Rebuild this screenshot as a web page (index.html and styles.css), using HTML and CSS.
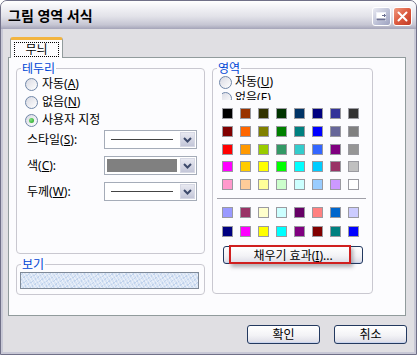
FILE: index.html
```html
<!DOCTYPE html>
<html lang="ko">
<head>
  <meta charset="UTF-8" />
  <title>그림 영역 서식</title>
  <link rel="stylesheet" href="styles.css">
</head>
<body>
  <div class="window">
    <div class="titlebar">
      <span class="title">그림 영역 서식</span>
      <div class="caption-btns">
        <span class="cbtn restore">
          <svg width="17" height="17" viewBox="0 0 17 17">
            <rect x="3.5" y="4.5" width="9" height="8" fill="#fff" stroke="#eef0f8"/>
            <rect x="3.5" y="10.5" width="9" height="2" fill="#6a6f92"/>
            <path d="M9 7.5 H12.5 M11 6 L12.5 7.5 L11 9" stroke="#6a6f92" stroke-width="1" fill="none"/>
          </svg>
        </span>
        <span class="cbtn close">
          <svg width="17" height="17" viewBox="0 0 17 17">
            <path d="M4.5 4.5 L12.5 12.5 M12.5 4.5 L4.5 12.5" stroke="#fff" stroke-width="2" stroke-linecap="round"/>
          </svg>
        </span>
      </div>
    </div>

    <div class="client">
      <div class="tabs">
        <div class="tab"><span class="focus">무늬</span></div>
      </div>

      <div class="pane">
        <div class="left-col">
          <fieldset class="group border-group">
            <legend>테두리</legend>
            <label class="radio"><span class="dot"></span><span>자동(<u>A</u>)</span></label>
            <label class="radio"><span class="dot"></span><span>없음(<u>N</u>)</span></label>
            <label class="radio"><span class="dot checked"></span><span>사용자 지정</span></label>
            <div class="fields">
              <span class="field-label">스타일(<u>S</u>):</span>
              <div class="combo">
                <span class="value"><span class="line"></span></span>
                <span class="arrow"><svg width="9" height="6" viewBox="0 0 9 6"><path d="M1 1 L4.5 4.5 L8 1" stroke="#3d4a6b" stroke-width="2" fill="none"/></svg></span>
              </div>
              <span class="field-label">색(<u>C</u>):</span>
              <div class="combo">
                <span class="fill"></span>
                <span class="arrow"><svg width="9" height="6" viewBox="0 0 9 6"><path d="M1 1 L4.5 4.5 L8 1" stroke="#3d4a6b" stroke-width="2" fill="none"/></svg></span>
              </div>
              <span class="field-label">두께(<u>W</u>):</span>
              <div class="combo">
                <span class="value"><span class="line"></span></span>
                <span class="arrow"><svg width="9" height="6" viewBox="0 0 9 6"><path d="M1 1 L4.5 4.5 L8 1" stroke="#3d4a6b" stroke-width="2" fill="none"/></svg></span>
              </div>
            </div>
          </fieldset>

          <fieldset class="group preview-group">
            <legend>보기</legend>
            <div class="preview"></div>
          </fieldset>
        </div>

        <fieldset class="group area-group">
          <legend>영역</legend>
          <label class="radio first"><span class="dot"></span><span>자동(<u>U</u>)</span></label>
          <div class="clip">
            <label class="radio"><span class="dot"></span><span>없음(E)</span></label>
          </div>
          <div class="palette">
            <div class="swatches main">
              <span class="swatch" style="background:#000000"></span>
              <span class="swatch" style="background:#993300"></span>
              <span class="swatch" style="background:#333300"></span>
              <span class="swatch" style="background:#003300"></span>
              <span class="swatch" style="background:#003366"></span>
              <span class="swatch" style="background:#000080"></span>
              <span class="swatch" style="background:#333399"></span>
              <span class="swatch" style="background:#333333"></span>
              <span class="swatch" style="background:#800000"></span>
              <span class="swatch" style="background:#ff6600"></span>
              <span class="swatch" style="background:#808000"></span>
              <span class="swatch" style="background:#008000"></span>
              <span class="swatch" style="background:#008080"></span>
              <span class="swatch" style="background:#0000ff"></span>
              <span class="swatch" style="background:#666699"></span>
              <span class="swatch" style="background:#808080"></span>
              <span class="swatch" style="background:#ff0000"></span>
              <span class="swatch" style="background:#ff9900"></span>
              <span class="swatch" style="background:#99cc00"></span>
              <span class="swatch" style="background:#339966"></span>
              <span class="swatch" style="background:#33cccc"></span>
              <span class="swatch" style="background:#3366ff"></span>
              <span class="swatch" style="background:#800080"></span>
              <span class="swatch" style="background:#969696"></span>
              <span class="swatch" style="background:#ff00ff"></span>
              <span class="swatch" style="background:#ffcc00"></span>
              <span class="swatch" style="background:#ffff00"></span>
              <span class="swatch" style="background:#00ff00"></span>
              <span class="swatch" style="background:#00ffff"></span>
              <span class="swatch" style="background:#00ccff"></span>
              <span class="swatch" style="background:#993366"></span>
              <span class="swatch" style="background:#c0c0c0"></span>
              <span class="swatch" style="background:#ff99cc"></span>
              <span class="swatch" style="background:#ffcc99"></span>
              <span class="swatch" style="background:#ffff99"></span>
              <span class="swatch" style="background:#ccffcc"></span>
              <span class="swatch" style="background:#ccffff"></span>
              <span class="swatch" style="background:#99ccff"></span>
              <span class="swatch" style="background:#cc99ff"></span>
              <span class="swatch" style="background:#ffffff"></span>
            </div>
            <div class="divider"></div>
            <div class="swatches custom">
              <span class="swatch" style="background:#9999ff"></span>
              <span class="swatch" style="background:#993366"></span>
              <span class="swatch" style="background:#ffffcc"></span>
              <span class="swatch" style="background:#ccffff"></span>
              <span class="swatch" style="background:#660066"></span>
              <span class="swatch" style="background:#ff8080"></span>
              <span class="swatch" style="background:#0066cc"></span>
              <span class="swatch" style="background:#ccccff"></span>
              <span class="swatch" style="background:#000080"></span>
              <span class="swatch" style="background:#ff00ff"></span>
              <span class="swatch" style="background:#ffff00"></span>
              <span class="swatch" style="background:#00ffff"></span>
              <span class="swatch" style="background:#800080"></span>
              <span class="swatch" style="background:#800000"></span>
              <span class="swatch" style="background:#008080"></span>
              <span class="swatch" style="background:#0000ff"></span>
            </div>
            <button class="btn fill-btn" type="button">채우기 효과(<u>I</u>)...<span class="mark"></span></button>
          </div>
        </fieldset>
      </div>

      <div class="actions">
        <button class="btn" type="button">확인</button>
        <button class="btn" type="button">취소</button>
      </div>
    </div>
  </div>
</body>
</html>
```

FILE: styles.css
```css
body {
  margin: 0;
  font-family: "Noto Sans", "Noto Sans CJK KR", sans-serif;
  font-size: 12px;
  color: #000;
}
.window {
  width: 417px;
  height: 355px;
  box-sizing: border-box;
  border: 1px solid #707088;
  border-radius: 7px 7px 0 0;
  background: #e0dfe3;
  display: flex;
  flex-direction: column;
  overflow: hidden;
}
.titlebar {
  height: 28px;
  flex: none;
  display: flex;
  align-items: center;
  justify-content: space-between;
  padding: 0 4px 0 7px;
  background: linear-gradient(#ffffff, #f1f1f5 25%, #e2e2e9 55%, #c6c6d3 85%, #a4a4b8);
}
.title {
  font-weight: bold;
  font-size: 14px;
  line-height: 16px;
  margin-top: 2px;
}
.caption-btns {
  display: flex;
  gap: 2px;
  margin-top: 3px;
}
.cbtn {
  width: 19px;
  height: 19px;
  box-sizing: border-box;
  border: 1px solid #fff;
  border-radius: 3px;
  display: flex;
  align-items: center;
  justify-content: center;
}
.restore {
  background: linear-gradient(135deg, #e9eaf2, #b9bdd4 60%, #9ea3c0);
}
.close {
  background: linear-gradient(135deg, #f09a80, #dc5a3e 50%, #c23a26);
}
.client {
  flex: 1;
  border: solid #c8c8d6;
  border-width: 0 2px 2px;
  padding: 8px 8px 0 5px;
  display: flex;
  flex-direction: column;
}
.tabs {
  display: flex;
  padding-left: 2px;
  height: 21px;
  margin-bottom: -1px;
  position: relative;
}
.tab {
  width: 53px;
  box-sizing: border-box;
  border: 1px solid #919b9c;
  border-top: 3px solid #f2b43f;
  border-bottom: none;
  border-radius: 3px 3px 0 0;
  background: #fcfcfe;
  display: flex;
  align-items: center;
  justify-content: center;
}
.tab .focus {
  border: 1px dotted #000;
  padding: 0 10px;
  line-height: 13px;
}
.pane {
  height: 259px;
  box-sizing: border-box;
  border: 1px solid #919b9c;
  background: #fcfcfe;
  display: flex;
  gap: 7px;
  padding: 4px 7px;
}
.left-col {
  width: 189px;
  display: flex;
  flex-direction: column;
}
.group {
  margin: 0;
  border: 1px solid #c9c8d0;
  border-radius: 4px;
  box-sizing: border-box;
  min-width: 0;
}
.group legend {
  color: #0046d5;
  line-height: 13px;
  padding: 0 1px;
}
.border-group {
  height: 192px;
  padding: 0 0 0 8px;
}
.border-group legend {
  margin-left: -4px;
}
.radio {
  display: flex;
  align-items: center;
  gap: 4px;
  height: 18px;
  line-height: 14px;
}
.dot {
  width: 13px;
  height: 13px;
  box-sizing: border-box;
  border: 1px solid #6f86a8;
  border-radius: 50%;
  background: linear-gradient(135deg, #d8d9e2, #ffffff);
  display: flex;
  align-items: center;
  justify-content: center;
}
.dot.checked::after {
  content: "";
  width: 5px;
  height: 5px;
  border-radius: 50%;
  background: radial-gradient(circle at 35% 35%, #7fe07f, #21a121);
}
.fields {
  display: grid;
  grid-template-columns: 77px 93px;
  grid-auto-rows: 19px;
  row-gap: 7px;
  margin-top: 1px;
  padding-left: 2px;
  align-items: center;
}
.field-label {
  line-height: 14px;
}
.combo {
  height: 19px;
  box-sizing: border-box;
  border: 1px solid #a5acb8;
  background: #fff;
  display: flex;
}
.combo .value {
  flex: 1;
  display: flex;
  align-items: center;
  padding: 0 6px;
}
.combo .line {
  width: 62px;
  height: 1px;
  background: #444;
}
.combo .fill {
  flex: 1;
  margin: 2px;
  background: #808080;
}
.combo .arrow {
  width: 15px;
  margin: 1px;
  box-sizing: border-box;
  border: 1px solid #d6d8e4;
  background: linear-gradient(#e8e9f1, #c3c6d8);
  display: flex;
  align-items: center;
  justify-content: center;
}
.preview-group {
  margin-top: 4px;
  padding: 0 5px 5px 3px;
}
.preview-group legend {
  margin-left: 1px;
}
.preview {
  margin-top: 1px;
  height: 17px;
  box-sizing: border-box;
  border: 1px solid #7f8a98;
  background:
    repeating-linear-gradient(60deg, rgba(255,255,255,.45) 0 1px, transparent 1px 3px),
    repeating-linear-gradient(-35deg, rgba(170,195,230,.5) 0 1px, transparent 1px 4px),
    #d7e3f4;
}
.area-group {
  width: 161px;
  height: 232px;
  padding: 0 0 0 9px;
}
.area-group legend {
  margin-left: -5px;
}
.area-group .radio {
  height: 16px;
  gap: 3px;
  margin-left: -3px;
}
.area-group .radio.first {
  margin-top: -1px;
}
.clip {
  height: 10px;
  overflow: hidden;
}
.palette {
  padding-top: 8px;
}
.swatches {
  display: grid;
  grid-template-columns: repeat(8, 11px);
  grid-auto-rows: 11px;
  column-gap: 7px;
}
.swatches.main {
  row-gap: 6.75px;
}
.swatches.custom {
  row-gap: 7.5px;
  margin-top: 8px;
}
.swatch {
  box-sizing: border-box;
  border: 1px solid #9a9aa0;
}
.divider {
  width: 149px;
  height: 1px;
  margin: 8px 0 0 -5px;
  background: #a0a0a8;
}
.btn {
  font-family: inherit;
  font-size: 12px;
  color: #000;
  width: 73px;
  height: 19px;
  padding: 0;
  box-sizing: border-box;
  border: 1px solid #23395f;
  border-radius: 3px;
  background: linear-gradient(#ffffff, #f3f3f6 55%, #dcdce6);
  box-shadow: inset 0 -1px 0 #c9d4ee;
  line-height: 15px;
}
.fill-btn {
  width: 140px;
  height: 18px;
  margin: 9.5px 0 0 1px;
  position: relative;
}
.mark {
  position: absolute;
  left: 5px;
  right: 11px;
  top: -2px;
  bottom: -1px;
  border: 2px solid #d01f1f;
  box-shadow: 2px 3px 4px rgba(60, 60, 70, .4);
}
.actions {
  display: flex;
  justify-content: flex-end;
  gap: 14px;
  margin: 9px -1px 0 0;
}
```
